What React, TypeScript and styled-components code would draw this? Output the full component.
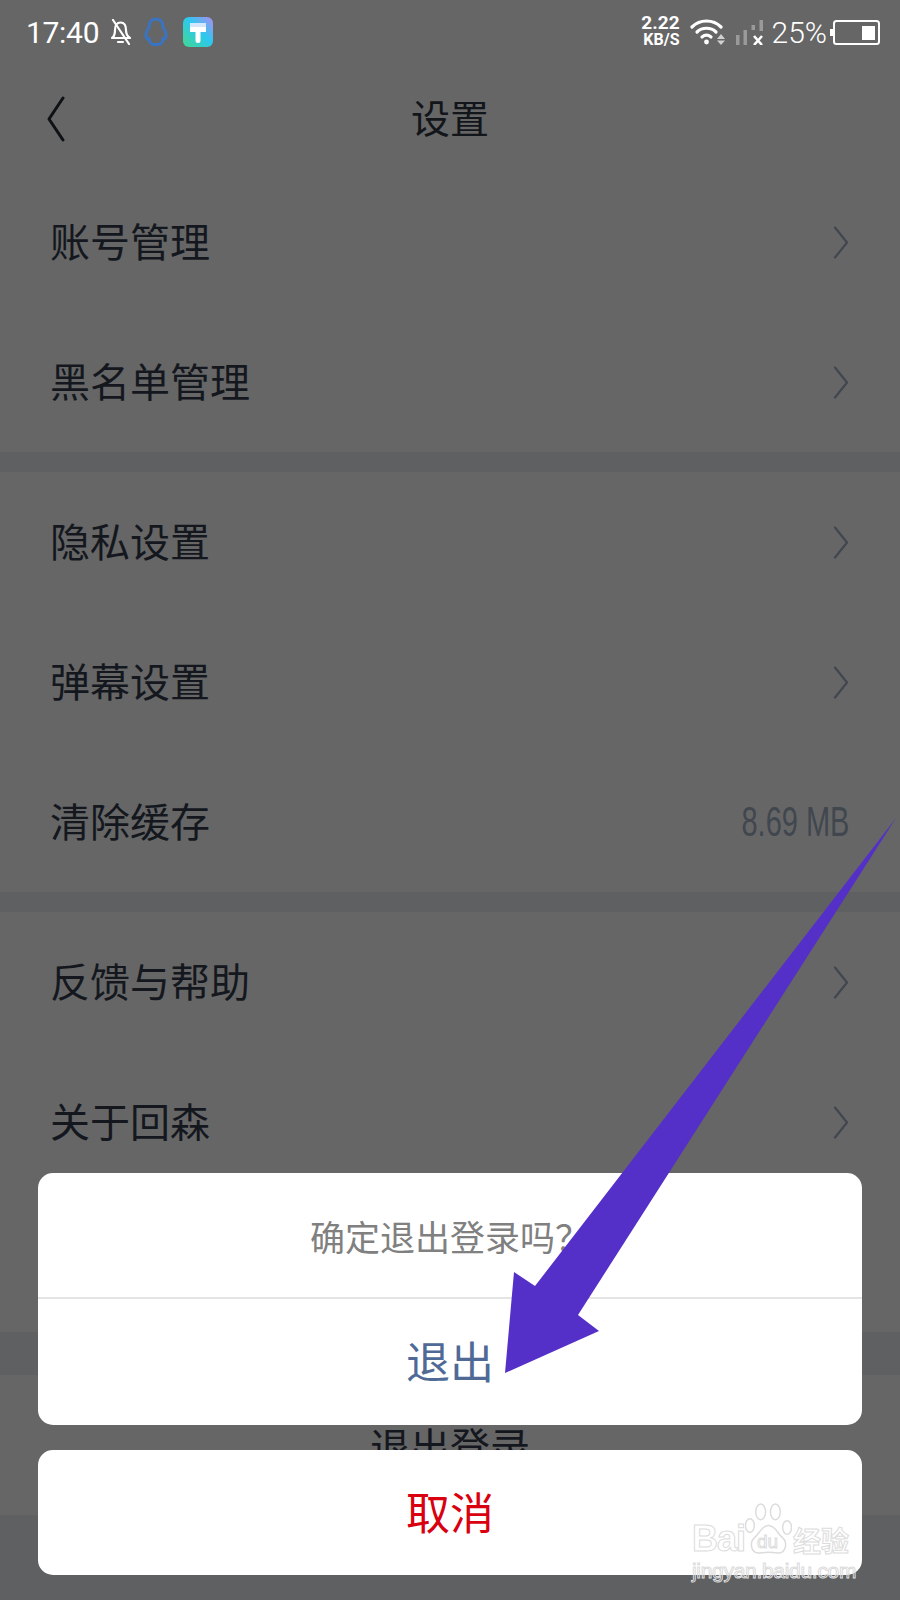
import React from 'react'
import styled, { createGlobalStyle } from 'styled-components'

const CJK = `"Noto Sans CJK SC", "Noto Sans", sans-serif`

const GlobalStyle = createGlobalStyle`
	html, body {
		margin: 0;
		padding: 0;
		background: #666666;
	}
	* {
		box-sizing: border-box;
	}
`

const Chevron = () => (
	<svg width="16" height="33" viewBox="0 0 16 33" fill="none">
		<path d="M2 1.500 L14 16.500 L2 31.500" stroke="#41474f" strokeWidth="2.200" strokeLinecap="round" strokeLinejoin="round" />
	</svg>
)

const BellOff = () => (
	<svg width="22" height="26" viewBox="0 0 22 26" fill="none" stroke="#fff" strokeWidth="2.200" strokeLinecap="round" strokeLinejoin="round">
		<path d="M2 19 C5 17 5 14 5 11 C5 6 7 3.500 10.500 3.500 C14 3.500 16 6 16 11 C16 14 16.500 17 20 19 Z" />
		<path d="M8 23 H13" />
		<path d="M3 1 L19 25" />
	</svg>
)

const QQ = () => (
	<svg width="26" height="30" viewBox="0 0 26 30" fill="none" stroke="#3a74c0" strokeWidth="3" strokeLinejoin="round">
		<path d="M13 2 C18.500 2 20 6.500 20 10.500 C22.500 14 24 18 22.500 21 C21.500 23 20.500 21.500 20 21 C20 23 19.500 25 18 26.500 C16 28 15 27.500 13 27.500 C11 27.500 10 28 8 26.500 C6.500 25 6 23 6 21 C5.500 21.500 4.500 23 3.500 21 C2 18 3.500 14 6 10.500 C6 6.500 7.500 2 13 2 Z" />
	</svg>
)

const BrushApp = () => (
	<svg width="30" height="30" viewBox="0 0 30 30">
		<defs>
			<linearGradient id="brushBg" x1="0" y1="1" x2="1" y2="0">
				<stop offset="0" stopColor="#42d88f" />
				<stop offset="0.55" stopColor="#2cc8f0" />
				<stop offset="1" stopColor="#b18bf0" />
			</linearGradient>
		</defs>
		<rect width="30" height="30" rx="6" fill="url(#brushBg)" />
		<rect x="7" y="6" width="16" height="4" fill="#d4e6fb" />
		<path d="M7 10 H23 V15 H17.500 V24 Q17.500 26 15 26 Q12.500 26 12.500 24 V15 H7 Z" fill="#fff" />
	</svg>
)

const Wifi = () => (
	<svg width="36" height="26" viewBox="0 0 36 26" fill="none" stroke="#fff" strokeWidth="3.200" strokeLinecap="round">
		<path d="M2 8 C10 0 23 0 31 8" />
		<path d="M7 13 C12 8 21 8 26 13" />
		<path d="M12 18 C15 15.500 18 15.500 21 18" />
		<circle cx="16.500" cy="23" r="2.400" fill="#fff" stroke="none" />
		<path d="M31 15 L35 20 H27 Z M31 26 L27 21.500 H35 Z" fill="#d0d0d0" stroke="none" />
	</svg>
)

const Signal = () => (
	<svg width="28" height="25" viewBox="0 0 28 25">
		<rect x="0" y="15" width="3.500" height="10" fill="#9a9a9a" />
		<rect x="7.500" y="10" width="3.500" height="15" fill="#9a9a9a" />
		<rect x="15.500" y="5" width="3.500" height="5" fill="#9a9a9a" />
		<rect x="23.500" y="0" width="3.500" height="11" fill="#9a9a9a" />
		<path d="M18 16 L26 25 M26 16 L18 25" stroke="#fff" strokeWidth="2.600" />
	</svg>
)

const Battery = () => (
	<svg width="50" height="25" viewBox="0 0 50 25">
		<rect x="0" y="9" width="3" height="7" fill="#fff" />
		<rect x="4" y="1" width="45" height="23" rx="2.500" fill="none" stroke="#fff" strokeWidth="2" />
		<rect x="32" y="6" width="13" height="14" fill="#fff" />
	</svg>
)

const Paw = () => (
	<svg width="47" height="52" viewBox="0 0 48 53" fill="none" stroke="#dcdcdc" strokeWidth="1.500">
		<ellipse cx="16" cy="9" rx="5" ry="8" />
		<ellipse cx="31" cy="9" rx="5" ry="8" />
		<ellipse cx="5" cy="23" rx="4.500" ry="7" />
		<ellipse cx="43" cy="25" rx="4.500" ry="7" />
		<path d="M24 23 C31 23 33 31 38 35 C44 40 42 52 33 51 C27 50 21 50 15 51 C6 52 4 40 10 35 C15 31 17 23 24 23 Z" />
	</svg>
)

const settingGroups: { label: string; value?: string }[][] = [
	[{ label: '账号管理' }, { label: '黑名单管理' }],
	[{ label: '隐私设置' }, { label: '弹幕设置' }, { label: '清除缓存', value: '8.69 MB' }],
	[{ label: '反馈与帮助' }, { label: '关于回森' }, { label: '' }],
]

export default function App() {
	return (
		<>
			<GlobalStyle />
			<Screen>
				<StatusBar>
					<LeftStatus>
						<Clock>17:40</Clock>
						<BellOff />
						<QQ />
						<BrushSlot><BrushApp /></BrushSlot>
					</LeftStatus>
					<RightStatus>
						<NetSpeed>
							<span>2.22</span>
							<NetUnit>KB/S</NetUnit>
						</NetSpeed>
						<Wifi />
						<Signal />
						<Percent>25%</Percent>
						<Battery />
					</RightStatus>
				</StatusBar>
				<Header>
					<BackButton>
						<svg width="20" height="46" viewBox="0 0 20 46" fill="none">
							<path d="M17 2 L3 23 L17 44" stroke="#0e1116" strokeWidth="3" strokeLinecap="round" strokeLinejoin="round" />
						</svg>
					</BackButton>
					<Title>设置</Title>
				</Header>
				{settingGroups.map((group, i) => (
					<Group key={i}>
						{group.map((row, j) => (
							<Row key={j}>
								<RowLabel>{row.label}</RowLabel>
								{row.value ? <RowValue>{row.value}</RowValue> : row.label ? <Chevron /> : null}
							</Row>
						))}
					</Group>
				))}
				<LogoutBand />
				<LogoutRow>退出登录</LogoutRow>
				<BottomFill />
				<Sheet>
					<SheetCard>
						<Question>确定退出登录吗？</Question>
						<SheetAction $color="#4f6a96" $height={126}>退出</SheetAction>
					</SheetCard>
					<SheetCard>
						<SheetAction $color="#d9000f" $height={125}>取消</SheetAction>
					</SheetCard>
				</Sheet>
				<Arrow viewBox="0 0 900 1600" width="900" height="1600">
					<path d="M896 818 L535 1286 L514 1272 L505 1373 L599 1331 L578 1315 Z" fill="#5530c8" />
				</Arrow>
				<Watermark>
					<WatermarkTop>
						<WatermarkWord>Bai</WatermarkWord>
						<PawSlot><Paw /><PawText>du</PawText></PawSlot>
						<WatermarkCn>经验</WatermarkCn>
					</WatermarkTop>
					<WatermarkUrl>jingyan.baidu.com</WatermarkUrl>
				</Watermark>
			</Screen>
		</>
	)
}

const Screen = styled.div`
	position: relative;
	display: flex;
	flex-direction: column;
	width: 900px;
	height: 1600px;
	overflow: hidden;
	background: #666666;
	font-family: ${CJK};
`

const StatusBar = styled.div`
	display: flex;
	align-items: center;
	justify-content: space-between;
	height: 60px;
	padding: 4px 20px 0 26px;
	color: #ffffff;
`

const LeftStatus = styled.div`
	display: flex;
	align-items: center;
	gap: 11px;
`

const BrushSlot = styled.div`
	display: flex;
	margin-left: 3px;
`

const RightStatus = styled.div`
	display: flex;
	align-items: center;
	gap: 10px;
`

const Clock = styled.span`
	font-family: Roboto, sans-serif;
	font-size: 30px;
	font-weight: 400;
	letter-spacing: -0.3px;
`

const NetSpeed = styled.div`
	display: flex;
	flex-direction: column;
	align-items: flex-end;
	padding-bottom: 2px;
	font-family: Roboto, sans-serif;
	font-size: 19px;
	font-weight: 700;
	line-height: 17px;
`

const NetUnit = styled.span`
	font-size: 16px;
	font-weight: 700;
`

const Percent = styled.span`
	margin: 0 -7px 0 -2px;
	font-family: Roboto, sans-serif;
	font-size: 30px;
	font-weight: 300;
`

const Header = styled.div`
	display: grid;
	grid-template-columns: 1fr auto 1fr;
	align-items: center;
	height: 112px;
	padding: 0 46px;
`

const BackButton = styled.div`
	display: flex;
	justify-self: start;
	margin-top: 6px;
`

const Title = styled.div`
	font-size: 39px;
	color: #12151a;
`

const Group = styled.div`
	display: flex;
	flex-direction: column;
	border-bottom: 20px solid #5e6062;
	&:nth-of-type(5) {
		border-bottom: 0;
	}
`

const Row = styled.div`
	display: flex;
	align-items: center;
	justify-content: space-between;
	height: 140px;
	padding: 0 51px 0 50px;
`

const RowLabel = styled.span`
	margin-bottom: 4px;
	font-size: 40px;
	color: #14181e;
`

const RowValue = styled.span`
	display: inline-block;
	font-family: "Liberation Sans", sans-serif;
	font-size: 42px;
	color: #41474f;
	transform: scaleX(0.69);
	transform-origin: right center;
`

const LogoutBand = styled.div`
	height: 43px;
	background: #5e6062;
`

const LogoutRow = styled.div`
	display: flex;
	align-items: center;
	justify-content: center;
	height: 140px;
	font-size: 40px;
	color: #14181e;
`

const BottomFill = styled.div`
	flex: 1;
	background: #5e6062;
`

const Sheet = styled.div`
	position: absolute;
	left: 38px;
	right: 38px;
	top: 1173px;
	display: flex;
	flex-direction: column;
	gap: 25px;
`

const SheetCard = styled.div`
	display: flex;
	flex-direction: column;
	border-radius: 15px;
	background: #ffffff;
	overflow: hidden;
`

const Question = styled.div`
	display: flex;
	align-items: center;
	justify-content: center;
	height: 126px;
	border-bottom: 2px solid #e4e4e4;
	font-size: 35px;
	color: #808080;
`

const SheetAction = styled.div<{ $color: string; $height: number }>`
	display: flex;
	align-items: center;
	justify-content: center;
	height: ${(props) => props.$height}px;
	padding-bottom: 4px;
	font-size: 44px;
	color: ${(props) => props.$color};
`

const Arrow = styled.svg`
	position: absolute;
	left: 0;
	top: 0;
	pointer-events: none;
`

const Watermark = styled.div`
	position: absolute;
	left: 692px;
	top: 1503px;
	display: flex;
	flex-direction: column;
	color: transparent;
`

const WatermarkTop = styled.div`
	display: flex;
	align-items: flex-end;
	height: 52px;
`

const WatermarkWord = styled.span`
	width: 53px;
	font-family: "Liberation Sans", sans-serif;
	font-size: 36px;
	font-weight: 700;
	line-height: 32px;
	letter-spacing: -1px;
	-webkit-text-stroke: 1px #dcdcdc;
`

const PawSlot = styled.div`
	position: relative;
	display: flex;
	width: 48px;
`

const PawText = styled.span`
	position: absolute;
	left: 12px;
	bottom: 4px;
	font-family: "Liberation Sans", sans-serif;
	font-size: 19px;
	line-height: 19px;
	-webkit-text-stroke: 1px #dcdcdc;
`

const WatermarkCn = styled.span`
	font-size: 28px;
	line-height: 30px;
	font-weight: 700;
	-webkit-text-stroke: 1px #dcdcdc;
`

const WatermarkUrl = styled.div`
	margin-top: 4px;
	font-family: "Liberation Sans", sans-serif;
	font-size: 21px;
	line-height: 24px;
	letter-spacing: -0.3px;
	-webkit-text-stroke: 1px #dcdcdc;
`
